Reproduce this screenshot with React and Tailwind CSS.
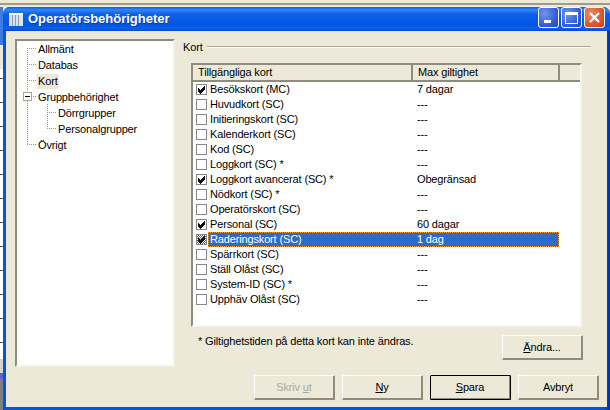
const rows = [
  ["Besökskort (MC)", "7 dagar", true],
  ["Huvudkort (SC)", "---"],
  ["Initieringskort (SC)", "---"],
  ["Kalenderkort (SC)", "---"],
  ["Kod (SC)", "---"],
  ["Loggkort (SC) *", "---"],
  ["Loggkort avancerat (SC) *", "Obegränsad", true],
  ["Nödkort (SC) *", "---"],
  ["Operatörskort (SC)", "---"],
  ["Personal (SC)", "60 dagar", true],
  ["Raderingskort (SC)", "1 dag", true, true],
  ["Spärrkort (SC)", "---"],
  ["Ställ Olåst (SC)", "---"],
  ["System-ID (SC) *", "---"],
  ["Upphäv Olåst (SC)", "---"],
];

function Check({ checked, selected }) {
  return (
    <div className={`w-[11px] h-[11px] shrink-0 border border-[#85878c] ${selected ? "bg-[repeating-conic-gradient(#316ac5_0_25%,#ffffff_0_50%)] bg-[length:2px_2px]" : "bg-white"}`}>
      {checked && (
        <svg width="9" height="9" viewBox="0 0 9 9" className="block">
          <path d="M1 3.5 L3.5 6 L8 1.5 M1 4.5 L3.5 7 L8 2.5 M1 5.5 L3.5 8 L8 3.5" stroke="#111" strokeWidth="1" fill="none" shapeRendering="crispEdges" />
        </svg>
      )}
    </div>
  );
}

function Btn({ children, disabled, primary }) {
  return (
    <div className={`w-[81px] h-[25px] flex items-center justify-center rounded-[1px] border-t border-l border-t-white border-l-white border-r-2 border-b-2 border-r-[#8f8c7f] border-b-[#8f8c7f] bg-[#ece9d8] ${primary ? "outline outline-1 outline-offset-[-1px] outline-black" : ""} ${disabled ? "text-[#aca899]" : "text-black"}`}>
      {children}
    </div>
  );
}

function TreeItem({ children, pl = "pl-[22px]", selected }) {
  return (
    <div className={`h-[16px] flex items-center ${pl}`}>
      <span className={`px-[1px] leading-[15px] ${selected ? "bg-[#ece9d8]" : ""}`}>{children}</span>
    </div>
  );
}

export default function App() {
  return (
    <div className="w-[610px] h-[410px] overflow-hidden flex flex-col bg-[#ece9d8] text-[11px] tracking-[-0.15px] text-black font-['Liberation_Sans',Arial,sans-serif]">
      <div className="h-[7px] shrink-0 flex flex-col">
        <div className="h-[3px] bg-[#ece9d8]" />
        <div className="h-[2px] bg-[#a09c8c]" />
        <div className="h-[2px] bg-[#ece9d8]" />
      </div>
      <div className="flex-1 flex min-h-0">
        <div className="w-[3px] shrink-0 flex flex-col">
          <div className="h-[38px] bg-[#3d7be0]" />
          <div className="h-[24px] bg-[#ece9d8]" />
          <div className="h-[290px] bg-[repeating-linear-gradient(180deg,#ffffff_0_9px,#555555_9px_10px,#ffffff_10px_24px)]" />
          <div className="h-[14px] bg-[#d8d5c6]" />
          <div className="h-[6px] bg-[#5c64d8]" />
          <div className="flex-1 bg-[#808080]" />
        </div>
        <div className="w-[607px] shrink-0 flex flex-col rounded-t-[7px] overflow-hidden bg-[linear-gradient(90deg,#0055e5_0%,#0055e5_99%,#00309c_100%)]">
          <div className="h-[24px] shrink-0 flex items-center bg-[linear-gradient(180deg,#0a5fe6_0%,#2f86f7_12%,#0d5fe8_30%,#0056e3_75%,#0a60ec_90%,#0046c8_100%)] pl-[6px]">
            <svg width="14" height="13" viewBox="0 0 14 13" className="shrink-0">
              <rect x="0" y="0" width="14" height="13" fill="#dfe3ec" />
              <rect x="0" y="0" width="14" height="2" fill="#ffffff" />
              <path d="M3.5 2V13M6.5 2V13M9.5 2V13" stroke="#8d99b8" strokeWidth="1" />
            </svg>
            <span className="ml-[5px] text-white font-bold text-[13px] tracking-[0px] [text-shadow:1px_1px_0_#0a3aa8]">Operatörsbehörigheter</span>
            <div className="ml-auto mr-[5px] flex gap-[2px] -mt-[3px]">
              <div className="w-[21px] h-[21px] rounded-[3px] border border-white bg-[radial-gradient(circle_at_30%_30%,#6f95ef,#2a58d8_70%,#2048c0)] flex items-end pl-[5px] pb-[4px]">
                <div className="w-[7px] h-[3px] bg-white" />
              </div>
              <div className="w-[21px] h-[21px] rounded-[3px] border border-white bg-[radial-gradient(circle_at_30%_30%,#6f95ef,#2a58d8_70%,#2048c0)] flex items-center justify-center">
                <div className="w-[13px] h-[12px] border border-white border-t-[3px]" />
              </div>
              <div className="w-[21px] h-[21px] rounded-[3px] border border-white bg-[radial-gradient(circle_at_30%_30%,#e98a6c,#d84f25_70%,#c23c14)] flex items-center justify-center">
                <svg width="13" height="13" viewBox="0 0 13 13">
                  <path d="M2 2L11 11M11 2L2 11" stroke="#fff" strokeWidth="2.2" />
                </svg>
              </div>
            </div>
          </div>
          <div className="flex-1 min-h-0 flex pl-[3px] pb-[3px] pr-[3px]">
            <div className="flex-1 bg-[#ece9d8] flex flex-col pt-[8px] pl-[9px] pr-[8px]">
              <div className="flex">
                <div className="relative w-[160px] h-[328px] shrink-0 bg-white border-t-2 border-l-2 border-t-[#8f8c7f] border-l-[#8f8c7f] border-r-2 border-b-2 border-r-[#f4f2e8] border-b-[#f4f2e8]">
                  <svg width="60" height="110" className="absolute left-0 top-0" shapeRendering="crispEdges">
                    <path d="M10 7V51M10 60V103M10 7H19M10 23H19M10 39H19M14 55H19M10 103H19M30 63V87M30 71H39M30 87H39" stroke="#9a9a9a" strokeWidth="1" strokeDasharray="1 1" fill="none" />
                    <rect x="6.5" y="51.5" width="8" height="8" fill="#fff" stroke="#a8a595" />
                    <path d="M8 55.5H13" stroke="#000" />
                  </svg>
                  <div className="relative">
                    <TreeItem pl="pl-[20px]">Allmänt</TreeItem>
                    <TreeItem pl="pl-[20px]">Databas</TreeItem>
                    <TreeItem pl="pl-[20px]" selected>Kort</TreeItem>
                    <TreeItem pl="pl-[20px]">Gruppbehörighet</TreeItem>
                    <TreeItem pl="pl-[40px]">Dörrgrupper</TreeItem>
                    <TreeItem pl="pl-[40px]">Personalgrupper</TreeItem>
                    <TreeItem pl="pl-[20px]">Övrigt</TreeItem>
                  </div>
                </div>
                <div className="flex-1 min-w-0 pl-[8px] flex flex-col">
                  <div className="h-[16px] flex items-center gap-[4px] pr-[8px]">
                    <span>Kort</span>
                    <div className="flex-1 h-[2px] border-t border-t-[#aca899] border-b border-b-white" />
                  </div>
                  <div className="mt-[8px] ml-[8px] w-[391px] h-[264px] bg-white border-t-2 border-l-2 border-t-[#8f8c7f] border-l-[#8f8c7f] border-r-2 border-b-2 border-r-[#f6f5ee] border-b-[#f6f5ee] flex flex-col">
                    <div className="h-[17px] shrink-0 flex bg-[#ece9d8] border-b-2 border-b-[#8f8c7f]">
                      <div className="w-[220px] flex items-center pl-[5px] border-r-2 border-r-[#8f8c7f]">Tillgängliga kort</div>
                      <div className="w-[147px] flex items-center pl-[5px] border-r-2 border-r-[#8f8c7f]">Max giltighet</div>
                      <div className="flex-1" />
                    </div>
                    {rows.map(([name, val, checked, selected]) => (
                      <div key={name} className="h-[15px] shrink-0 flex items-center pl-[3px]">
                        <Check checked={checked} selected={selected} />
                        <div className={`w-[351px] h-[15px] flex items-center ml-[1px] ${selected ? "bg-[#316ac5] text-white outline outline-1 outline-offset-[-1px] outline-dotted outline-[#f0a030]" : ""}`}>
                          <span className="w-[209px] pl-[2px]">{name}</span>
                          <span>{val}</span>
                        </div>
                      </div>
                    ))}
                  </div>
                  <div className="mt-[8px] flex justify-between pl-[15px] pr-[16px]">
                    <span className="leading-[13px]">* Giltighetstiden på detta kort kan inte ändras.</span>
                    <Btn><span><u>Ä</u>ndra...</span></Btn>
                  </div>
                </div>
              </div>
              <div className="mt-[8px] flex justify-end gap-[7px]">
                <Btn disabled><span>Skriv <u>u</u>t</span></Btn>
                <Btn><span><u>N</u>y</span></Btn>
                <Btn primary><span><u>S</u>para</span></Btn>
                <Btn>Avbryt</Btn>
              </div>
            </div>
          </div>
        </div>
      </div>
    </div>
  );
}
